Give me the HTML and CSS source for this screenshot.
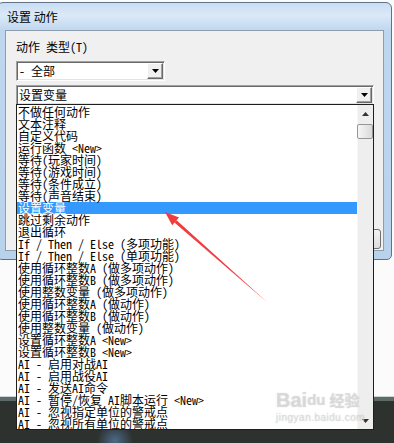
FILE: index.html
```html
<!DOCTYPE html>
<html lang="zh-CN">
<head>
  <meta charset="UTF-8">
  <meta name="viewport" content="width=device-width, initial-scale=1.0">
  <title>设置 动作</title>
  <link rel="stylesheet" href="styles.css">
</head>
<body>
  <div class="desktop">
    <!-- background behind the dialog -->
    <div class="backdrop-light"></div>
    <div class="backdrop-band"></div>
    <div class="backdrop-dark"></div>

    <div class="window">
      <div class="titlebar">设置 动作</div>
      <div class="client">
        <div class="field-label">动作 类型(T)</div>
        <div class="combo combo-small">
          <span class="combo-text">- 全部</span>
          <span class="combo-btn"><svg width="7" height="4" viewBox="0 0 7 4"><path d="M0 0H7L3.5 4Z" fill="#000"/></svg></span>
        </div>
        <div class="combo combo-wide">
          <span class="combo-text">设置变量</span>
          <span class="combo-btn"><svg width="7" height="4" viewBox="0 0 7 4"><path d="M0 0H7L3.5 4Z" fill="#000"/></svg></span>
        </div>
        <div class="button-row">
          <div class="push-btn"></div>
        </div>
      </div>
    </div>

    <!-- opened dropdown list -->
    <div class="droplist">
      <ul class="items">
        <li>不做任何动作</li>
        <li>文本注释</li>
        <li>自定义代码</li>
        <li>运行函数 &lt;New&gt;</li>
        <li>等待(玩家时间)</li>
        <li>等待(游戏时间)</li>
        <li>等待(条件成立)</li>
        <li>等待(声音结束)</li>
        <li class="selected">设置变量</li>
        <li>跳过剩余动作</li>
        <li>退出循环</li>
        <li>If / Then / Else (多项功能)</li>
        <li>If / Then / Else (单项功能)</li>
        <li>使用循环整数A (做多项动作)</li>
        <li>使用循环整数B (做多项动作)</li>
        <li>使用整数变量 (做多项动作)</li>
        <li>使用循环整数A (做动作)</li>
        <li>使用循环整数B (做动作)</li>
        <li>使用整数变量 (做动作)</li>
        <li>设置循环整数A &lt;New&gt;</li>
        <li>设置循环整数B &lt;New&gt;</li>
        <li>AI - 启用对战AI</li>
        <li>AI - 启用战役AI</li>
        <li>AI - 发送AI命令</li>
        <li>AI - 暂停/恢复 AI脚本运行 &lt;New&gt;</li>
        <li>AI - 忽视指定单位的警戒点</li>
        <li>AI - 忽视所有单位的警戒点</li>
      </ul>
      <div class="scrollbar">
        <div class="scroll-arrow"><svg width="7" height="4" viewBox="0 0 7 4"><path d="M3.5 0L7 4H0Z" fill="#333"/></svg></div>
        <div class="scroll-thumb"></div>
        <div class="scroll-track"></div>
        <div class="scroll-arrow"><svg width="7" height="4" viewBox="0 0 7 4"><path d="M0 0H7L3.5 4Z" fill="#333"/></svg></div>
      </div>
    </div>

    <div class="watermark">
      <div class="wm-logo"><span class="wm-bai">Bai</span><span class="wm-du">du</span><span class="wm-jy">经验</span></div>
      <div class="wm-url">jingyan.baidu.com</div>
    </div>

    <svg class="annotation" width="394" height="443" viewBox="0 0 394 443">
      <polygon points="268,303 176.6,220.3 174.4,222.5" fill="#f03c3c"/>
      <polygon points="165,212 179,217.4 172.2,225.3" fill="#f03c3c"/>
    </svg>
  </div>
</body>
</html>
```

FILE: styles.css
```css
body {
  margin: 0;
  font-family: "Noto Sans CJK SC", sans-serif;
  font-size: 12px;
  color: #000;
}

.desktop {
  position: relative;
  width: 394px;
  height: 443px;
  overflow: hidden;
  display: flex;
  flex-direction: column;
}

.backdrop-light {
  height: 396px;
  background: #fbfbfb;
}

.backdrop-band {
  height: 5px;
  background: linear-gradient(#cfd4d4 0 1px, #5f6a6a 1px);
}

.backdrop-dark {
  flex: 1;
  background:
    radial-gradient(circle at 115px 40px, #4c6a8a 0, rgba(60, 80, 100, 0) 18px),
    #2e322e;
}

/* dialog window */
.window {
  position: absolute;
  left: -3px;
  top: 2px;
  width: 395px;
  height: 258px;
  box-sizing: border-box;
  border: 1px solid #60728a;
  border-radius: 6px 6px 5px 5px;
  background: linear-gradient(180deg, #c9ddf2 0, #dbe9f7 12px, #bfd6ef 28px, #b9d2ec 100%);
  padding: 0 7px 8px 7px;
  display: flex;
  flex-direction: column;
}

.titlebar {
  height: 27px;
  display: flex;
  align-items: center;
  padding-left: 2px;
  padding-bottom: 1px;
  box-sizing: border-box;
  font-size: 12px;
}

.client {
  flex: 1;
  background: #f0f0f0;
  border: 1px solid #8f9eae;
  padding: 10px 2px 1px 10px;
  display: flex;
  flex-direction: column;
  align-items: flex-start;
}

.field-label {
  font-family: "Noto Sans Mono CJK SC", "Noto Sans CJK SC", monospace;
  height: 12px;
  line-height: 12px;
  margin-bottom: 8px;
}

.combo {
  box-sizing: border-box;
  height: 20px;
  display: flex;
  align-items: center;
  background: #fff;
  border: 1px solid;
  border-color: #a0a0a0 #fff #fff #a0a0a0;
  box-shadow: inset 1px 1px #696969, inset -1px -1px #e3e3e3;
  padding: 1px 1px 1px 2px;
}

.combo-small {
  width: 149px;
}

.combo-wide {
  width: 358px;
  margin-top: 4px;
}

.combo-text {
  flex: 1;
  font-family: "Noto Sans Mono CJK SC", "Noto Sans CJK SC", monospace;
  line-height: 16px;
  white-space: nowrap;
}

.combo-btn {
  width: 16px;
  height: 16px;
  box-sizing: border-box;
  display: flex;
  align-items: center;
  justify-content: center;
  background: #f0f0f0;
  border: 1px solid;
  border-color: #fff #696969 #696969 #fff;
  box-shadow: inset -1px -1px #a0a0a0;
}

.button-row {
  margin-top: auto;
  align-self: stretch;
  display: flex;
  justify-content: flex-end;
}

.push-btn {
  width: 75px;
  height: 20px;
  box-sizing: border-box;
  border: 1px solid #707070;
  border-radius: 3px;
  background: linear-gradient(#f2f2f2, #dddddd);
}

/* opened list */
.droplist {
  position: absolute;
  left: 16px;
  top: 104px;
  width: 358px;
  height: 326px;
  box-sizing: border-box;
  border: 1px solid #1e1e1e;
  background: #fff;
  display: flex;
}

.items {
  flex: 1;
  list-style: none;
  margin: 0;
  padding: 1px 0 0 0;
  overflow: hidden;
  font-family: "Noto Sans Mono CJK SC", "Noto Sans CJK SC", monospace;
}

.items li {
  height: 12px;
  line-height: 12px;
  padding-left: 1px;
  white-space: nowrap;
}

.items li.selected {
  background: #3399ff;
  color: #fff;
}

.scrollbar {
  width: 16px;
  background: #eeeeee;
  box-shadow: inset 1px 0 #f6f6f6;
  display: flex;
  flex-direction: column;
}

.scroll-arrow {
  height: 17px;
  display: flex;
  align-items: center;
  justify-content: center;
}

.scroll-thumb {
  margin-top: 2px;
  height: 15px;
  box-sizing: border-box;
  border: 1px solid #979797;
  border-radius: 2px;
  background: linear-gradient(90deg, #f6f6f6, #dadada);
}

.scroll-track {
  flex: 1;
}

/* site watermark */
.watermark {
  position: absolute;
  left: 276px;
  top: 388px;
  color: rgba(235, 235, 235, 0.55);
  text-shadow: 0 0 1px rgba(150, 150, 150, 0.6);
  font-family: "Liberation Sans", sans-serif;
}

.wm-logo {
  display: flex;
  align-items: flex-end;
  font-size: 20px;
  font-weight: bold;
  line-height: 24px;
}

.wm-du {
  font-size: 15px;
}

.wm-jy {
  font-family: "Noto Sans CJK SC", sans-serif;
  font-size: 15px;
  margin-left: 4px;
}

.wm-url {
  font-size: 10px;
  line-height: 12px;
  letter-spacing: 0.5px;
}

.annotation {
  position: absolute;
  left: 0;
  top: 0;
}
```
